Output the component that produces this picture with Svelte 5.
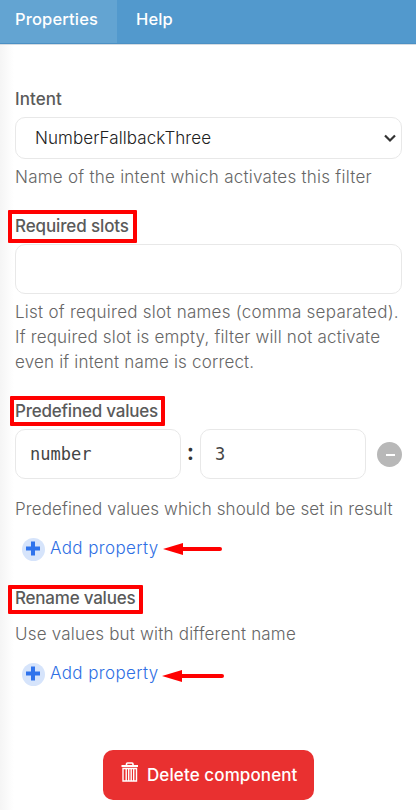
<script>
    let intent = 'NumberFallbackThree';
    let requiredSlots = '';
    let key = 'number';
    let value = '3';
</script>

<div class="panel">
    <nav class="tabs">
        <button class="tabs__item tabs__item--active">Properties</button>
        <button class="tabs__item">Help</button>
    </nav>

    <div class="content">
        <div class="group group--intent">
            <div class="label"><span class="label__text label__text--intent">Intent</span></div>
            <div class="select">
                <span>{intent}</span>
                <svg width="14" height="10" viewBox="0 0 14 10">
                    <path d="M2 2.5 L7 7.5 L12 2.5" fill="none" stroke="#333" stroke-width="2.2" />
                </svg>
            </div>
            <p class="help help--intent">Name of the intent which activates this filter</p>
        </div>

        <div class="group group--slots">
            <div class="label">
                <span class="label__text label__text--slots">Required slots</span>
                <i class="mark mark--slots"></i>
            </div>
            <input class="input" bind:value={requiredSlots} />
            <p class="help help--slots">
                <span class="help__l1">List of required slot names (comma separated).</span><br />
                <span class="help__l2">If required slot is empty, filter will not activate</span><br />
                <span class="help__l3">even if intent name is correct.</span>
            </p>
        </div>

        <div class="group group--predefined">
            <div class="label">
                <span class="label__text label__text--predefined">Predefined values</span>
                <i class="mark mark--predefined"></i>
            </div>
            <div class="pair">
                <input class="input input--mono" bind:value={key} />
                <span class="pair__colon">:</span>
                <input class="input input--mono" bind:value={value} />
                <button class="remove" aria-label="Remove">
                    <svg width="25" height="25" viewBox="0 0 25 25">
                        <circle cx="12.5" cy="12.5" r="12.5" fill="#b8b8b8" />
                        <path d="M9 13 H18" stroke="#fff" stroke-width="2" />
                    </svg>
                </button>
            </div>
            <p class="help help--predefined">Predefined values which should be set in result</p>
            <div class="add">
                <svg width="23" height="23" viewBox="0 0 23 23">
                    <circle cx="11.5" cy="11.5" r="11.5" fill="#d6e4fb" />
                    <path d="M11 3.5 V17.5 M4 10.5 H18" stroke="#2f73ec" stroke-width="4" />
                </svg>
                <span class="add__text">Add property</span>
                <svg class="arrow" width="60" height="14" viewBox="0 0 60 14">
                    <path d="M0 7 L20 1 V13 Z" fill="#f00" />
                    <path d="M18 7 H57" stroke="#f00" stroke-width="4" stroke-linecap="round" />
                </svg>
            </div>
        </div>

        <div class="group group--rename">
            <div class="label">
                <span class="label__text label__text--rename">Rename values</span>
                <i class="mark mark--rename"></i>
            </div>
            <p class="help help--rename">Use values but with different name</p>
            <div class="add">
                <svg width="23" height="23" viewBox="0 0 23 23">
                    <circle cx="11.5" cy="11.5" r="11.5" fill="#d6e4fb" />
                    <path d="M11 3.5 V17.5 M4 10.5 H18" stroke="#2f73ec" stroke-width="4" />
                </svg>
                <span class="add__text">Add property</span>
                <svg class="arrow arrow--low" width="62" height="14" viewBox="0 0 62 14">
                    <path d="M0 7 L20 1 V13 Z" fill="#f00" />
                    <path d="M18 7 H60" stroke="#f00" stroke-width="4" stroke-linecap="round" />
                </svg>
            </div>
        </div>

        <button class="delete">
            <svg width="18" height="21" viewBox="0 0 18 21">
                <path d="M5.5 3 V2 Q5.5 1 6.5 1 H11 Q12 1 12 2 V3" fill="none" stroke="#fff" stroke-width="1.6" />
                <path d="M0.5 4 H17" stroke="#fff" stroke-width="2" />
                <path d="M2 6.5 H15.5 V19 H2 Z M5.2 7 V18.5 M7.7 7 V18.5 M10.2 7 V18.5 M12.7 7 V18.5" fill="none" stroke="#fff" stroke-width="1.4" />
            </svg>
            <span>Delete component</span>
        </button>
    </div>
</div>

<style>
    :global(body) {
        margin: 0;
        background: #fff;
    }
    .panel {
        width: 416px;
        height: 810px;
        box-sizing: border-box;
        overflow: hidden;
        font-family: Inter, sans-serif;
        font-size: 17px;
        font-weight: 350;
        line-height: 25px;
        color: #666;
        background: linear-gradient(to right, #f5f5f5, #fff 14px);
    }
    button {
        font: inherit;
        border: 0;
        padding: 0;
        background: none;
    }
    .tabs {
        display: flex;
        height: 43px;
        background: #5299cd;
        border-bottom: 1px solid #4b90c4;
        box-shadow: 0 1px 0 #d5dce2;
    }
    .tabs__item {
        height: 43px;
        padding: 0 19px 5px;
        color: #fff;
        font-weight: 500;
        font-size: 16.5px;
        letter-spacing: 0.15px;
    }
    .tabs__item--active {
        width: 117px;
        padding: 0 0 5px 15px;
        text-align: left;
        background: #63a4d2;
    }
    .content {
        padding: 43px 14px 0 15px;
    }
    .group--slots, .group--predefined {
        margin-top: 24px;
    }
    .group--rename {
        margin-top: 25px;
    }
    .label {
        position: relative;
        height: 25px;
        margin-bottom: 5px;
    }
    .label__text {
        font-weight: 500;
        color: #5a5a5a;
        letter-spacing: -0.22px;
        white-space: nowrap;
    }
    .label__text--intent {
        letter-spacing: 0.05px;
    }
    .label__text--slots {
        letter-spacing: -0.12px;
    }
    .mark {
        position: absolute;
        box-sizing: border-box;
        border: 4px solid #f00;
        border-radius: 1px;
    }
    .mark--slots {
        left: -7px;
        top: -4px;
        width: 129px;
        height: 33px;
    }
    .mark--predefined {
        left: -5px;
        top: -3px;
        width: 155px;
        height: 30px;
    }
    .mark--rename {
        left: -7px;
        top: -1px;
        width: 135px;
        height: 29px;
    }
    .select, .input {
        box-sizing: border-box;
        width: 100%;
        border: 1px solid #e8e8e8;
        border-radius: 10px;
        background: #fff;
        color: #222;
    }
    .select {
        display: flex;
        align-items: center;
        justify-content: space-between;
        height: 42px;
        padding: 0 4px 0 19px;
        letter-spacing: 0.08px;
    }
    .input {
        display: block;
        height: 50px;
        padding: 0 14px;
        outline: 0;
    }
    .input--mono {
        width: 166px;
        color: #444;
        font: 17px "DejaVu Sans Mono", monospace;
    }
    .help {
        margin: 6px 0 0;
        letter-spacing: 0.25px;
        white-space: nowrap;
    }
    .help__l2, .help__l3 {
        letter-spacing: 0.18px;
    }
    .pair {
        display: flex;
        align-items: center;
    }
    .pair__colon {
        width: 19px;
        padding-bottom: 3px;
        text-align: center;
        font-size: 23px;
        font-weight: 600;
        color: #333;
    }
    .remove {
        width: 25px;
        height: 25px;
        margin-left: 11px;
    }
    .remove svg {
        display: block;
    }
    .help--predefined {
        margin-top: 18px;
        letter-spacing: 0.1px;
    }
    .help--rename {
        margin-top: 11px;
        letter-spacing: 0.2px;
    }
    .add {
        display: flex;
        align-items: center;
        height: 25px;
        margin-top: 14px;
        padding-left: 7px;
        color: #2f6fe4;
    }
    .add > svg:first-child {
        margin-top: 2px;
    }
    .add__text {
        width: 108px;
        margin-left: 5px;
        letter-spacing: 0.38px;
        white-space: nowrap;
    }
    .arrow {
        margin-left: 5px;
    }
    .arrow--low {
        margin: 4px 0 0 4px;
    }
    .delete {
        display: flex;
        align-items: center;
        width: 211px;
        height: 50px;
        margin: 64px auto 0 88px;
        padding-left: 18px;
        border-radius: 10px;
        background: #e93030;
        color: #fff;
        font-weight: 500;
    }
    .delete svg {
        margin-bottom: 6px;
    }
    .delete span {
        margin-left: 8px;
        letter-spacing: 0.1px;
        white-space: nowrap;
    }
</style>
